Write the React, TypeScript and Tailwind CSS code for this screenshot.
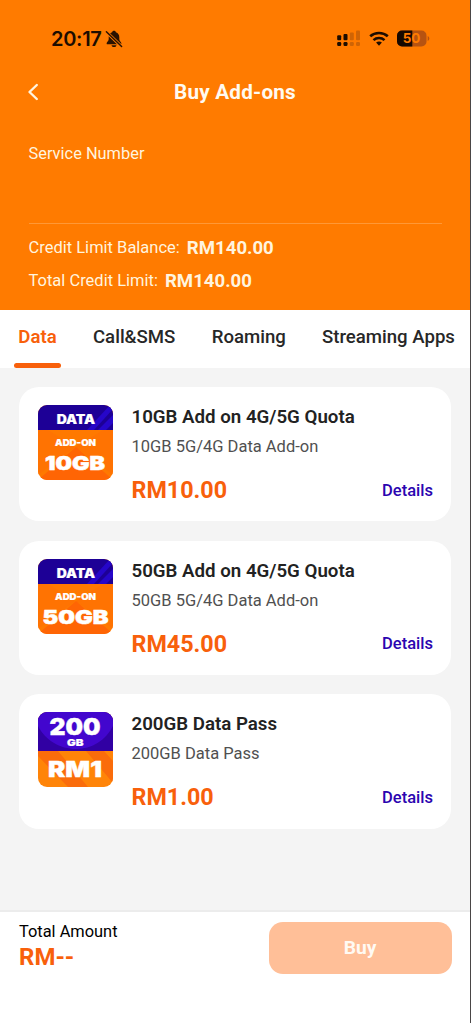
type Plan = {
  badge: 'addon' | 'pass';
  size: string;
  title: string;
  description: string;
  price: string;
};

const tabs = [
  { label: 'Data', width: 'w-[39px]' },
  { label: 'Call&SMS', width: 'w-[83px]' },
  { label: 'Roaming', width: 'w-[75px]' },
  { label: 'Streaming Apps', width: 'w-[133px]' },
];

const plans: Plan[] = [
  { badge: 'addon', size: '10GB', title: '10GB Add on 4G/5G Quota', description: '10GB 5G/4G Data Add-on', price: 'RM10.00' },
  { badge: 'addon', size: '50GB', title: '50GB Add on 4G/5G Quota', description: '50GB 5G/4G Data Add-on', price: 'RM45.00' },
  { badge: 'pass', size: '200', title: '200GB Data Pass', description: '200GB Data Pass', price: 'RM1.00' },
];

function BellOffIcon() {
  return (
    <svg viewBox="0 0 18 18" className="h-[18px] w-[18px]">
      <path d="M9 .8C8 .8 7.300 1.400 7.100 2.200C4.800 3 3.700 4.800 3.700 7.200v2C3.700 11 1.600 12 1.600 13.400c0 .6.400.900 1 .900h12.800c.6 0 1-.3 1-.9 0-1.400-2.100-2.400-2.100-4.200v-2c0-2.400-1.100-4.200-3.400-5C10.700 1.400 10 .8 9 .8Z" fill="#2a1200" />
      <path d="M6.500 15.200h5c-.3 1.200-1.200 1.900-2.500 1.900s-2.200-.7-2.500-1.900Z" fill="#2a1200" />
      <path d="M.8 1.300 17 17" stroke="#ff7b00" strokeWidth="3.200" />
      <path d="M1.400 1.800 16.600 16.500" stroke="#2a1200" strokeWidth="1.500" strokeLinecap="round" />
    </svg>
  );
}

function SignalIcon() {
  return (
    <svg viewBox="0 0 24 17" className="h-[17px] w-6">
      <g fill="#1c0d00">
        <rect x="0.200" y="5.300" width="4" height="5" rx="1" />
        <rect x="6.500" y="4" width="4" height="6.300" rx="1" />
        <rect x="0.200" y="12" width="4" height="4" rx="1.200" />
        <rect x="6.500" y="12" width="4" height="4" rx="1.200" />
      </g>
      <g fill="#cf6405">
        <rect x="12.800" y="2.500" width="4" height="7.800" rx="1" />
        <rect x="19" y="0.500" width="4" height="9.800" rx="1" />
        <rect x="12.800" y="12" width="4" height="4" rx="1.200" />
        <rect x="19" y="12" width="4" height="4" rx="1.200" />
      </g>
    </svg>
  );
}

function WifiIcon() {
  return (
    <svg viewBox="0 0 20 16" className="h-4 w-5" fill="none" stroke="#1c0d00" strokeWidth="2.600">
      <path d="M1.200 5.300C6 .9 14 .9 18.800 5.300" />
      <path d="M4.500 9.100c3-2.800 8-2.800 11 0" />
      <path d="M7.100 11.500c1.700-1.500 4.100-1.500 5.800 0L10 14.800Z" fill="#1c0d00" stroke="none" />
    </svg>
  );
}

function BatteryIcon() {
  return (
    <svg viewBox="0 0 33 17" className="h-[17px] w-[33px]">
      <rect x="0" y="0.500" width="29.500" height="16" rx="5" fill="#b65311" />
      <path d="M5 .5h10.300v16H5a5 5 0 0 1-5-5v-6a5 5 0 0 1 5-5Z" fill="#160800" />
      <path d="M30.700 6v5c1-.4 1.600-1.300 1.600-2.500S31.700 6.400 30.700 6Z" fill="#b65311" />
      <text x="5.800" y="13.300" fontSize="13.500" fontWeight="700" fontFamily="Inter, sans-serif" fill="#ff7b00" textLength="17.500">50</text>
    </svg>
  );
}

function AddonBadge({ size }: { size: string }) {
  return (
    <svg viewBox="0 0 75 75" className="h-[75px] w-[75px] shrink-0 rounded-[9px]">
      <rect width="75" height="75" fill="#ff7900" />
      <path d="M0 25h10l27 17L0 70Z" fill="#ff7302" />
      <path d="M75 25H65L38 42l37 28Z" fill="#ff7302" />
      <path d="M0 75 38 42l37 33Z" fill="#ff6504" />
      <rect width="75" height="25" fill="#1d0096" />
      <path d="M49 25 72 0h3v4L56 25Z" fill="#2606c9" />
      <path d="M60 25 75 10v8l-7 7Z" fill="#2606c9" />
      <g fill="white" stroke="white" fontFamily="Inter, 'Liberation Sans', sans-serif" fontWeight="900">
        <text x="18.700" y="18.500" fontSize="12.500" strokeWidth="0.200" textLength="38.500" lengthAdjust="spacingAndGlyphs">DATA</text>
        <text x="17" y="41" fontSize="9.300" strokeWidth="0.200" textLength="41" lengthAdjust="spacingAndGlyphs">ADD-ON</text>
        <text x={size === '50GB' ? 4.500 : 7} y="65.300" fontSize="18.800" strokeWidth="0.500" textLength={size === '50GB' ? 66 : 60} lengthAdjust="spacingAndGlyphs">{size}</text>
      </g>
    </svg>
  );
}

function PassBadge({ size }: { size: string }) {
  return (
    <svg viewBox="0 0 75 75" className="h-[75px] w-[75px] shrink-0 rounded-[9px]">
      <rect width="75" height="75" fill="#ff8408" />
      <path d="M0 39h20l30 36H30L0 44ZM48 39h18l9 10v22Z" fill="#fa6c0b" />
      <rect width="75" height="39" fill="#3100a3" />
      <path d="M0 0h75v14C68 28 54 37 38 37S7 28 0 14Z" fill="#4206ce" />
      <g fill="white" stroke="white" fontFamily="Inter, 'Liberation Sans', sans-serif" fontWeight="900">
        <text x="11.500" y="22.800" fontSize="23.500" strokeWidth="0.400" textLength="51" lengthAdjust="spacingAndGlyphs">{size}</text>
        <text x="29" y="33.800" fontSize="9.300" strokeWidth="0.200" textLength="16.500" lengthAdjust="spacingAndGlyphs">GB</text>
        <text x="10" y="64.500" fontSize="22" strokeWidth="0.400" textLength="54" lengthAdjust="spacingAndGlyphs">RM1</text>
      </g>
    </svg>
  );
}

function PlanCard({ plan }: { plan: Plan }) {
  return (
    <article className="flex h-[134.4px] gap-[19px] rounded-[20px] bg-white pt-[18px] pr-[18px] pl-[18.5px]">
      {plan.badge === 'addon' ? <AddonBadge size={plan.size} /> : <PassBadge size={plan.size} />}
      <div className="flex flex-1 flex-col">
        <h2 className="text-[18.7px] leading-[24px] font-semibold whitespace-nowrap text-[#222]">{plan.title}</h2>
        <p className="mt-[7px] text-[16.5px] leading-[22px] font-[450] text-[#505050]">{plan.description}</p>
        <div className="mt-[15.5px] flex items-center justify-between">
          <span className="text-[23.3px] leading-[32px] font-bold text-[#f8600b]">{plan.price}</span>
          <button className="pt-px text-[16.5px] leading-[32px] font-medium text-[#2b05b0]">Details</button>
        </div>
      </div>
    </article>
  );
}

export default function App() {
  return (
    <div className="flex h-[1023px] w-[471px] flex-col overflow-hidden border-r border-[#4a4646] bg-white font-[Roboto,sans-serif]">
      <header className="flex h-[309.5px] shrink-0 flex-col bg-[#ff7b00] text-[#fff4df]">
        {/* Status bar */}
        <div className="flex h-[60px] items-end justify-between pr-10 pb-[10.5px] pl-[51px]">
          <div className="flex items-center gap-[3px]">
            <span className="font-[Inter,sans-serif] text-[20px] leading-[22px] font-semibold tracking-[-0.3px] text-[#1c0d00]">20:17</span>
            <BellOffIcon />
          </div>
          <div className="flex h-[22px] items-center gap-2">
            <SignalIcon />
            <WifiIcon />
            <BatteryIcon />
          </div>
        </div>

        <div className="grid h-[64px] grid-cols-[70px_1fr_70px] items-center">
          <button className="pl-[27px]" aria-label="Back">
            <svg viewBox="0 0 12 18" className="h-[18px] w-3" fill="none" stroke="currentColor" strokeWidth="2.400" strokeLinecap="round" strokeLinejoin="round">
              <path d="M9.800 2 2.500 9l7.300 7" />
            </svg>
          </button>
          <h1 className="pt-px text-center text-[20.7px] font-bold tracking-[0.2px] text-[#fffaf0]">Buy Add-ons</h1>
        </div>

        <div className="mr-7 ml-[28.5px] flex flex-col">
          <p className="mt-[18px] text-[16.4px] leading-6 font-[450]">Service Number</p>
          <div className="mt-[57px] h-px bg-[#ff9836]" />
          <div className="mt-[12px] flex items-center gap-[7px] text-[16.5px] leading-6 font-[450]">
            <span>Credit Limit Balance:</span>
            <span className="text-[18.6px] font-bold">RM140.00</span>
          </div>
          <div className="mt-[9px] flex items-center gap-[7px] text-[16.5px] leading-6 font-[450]">
            <span>Total Credit Limit:</span>
            <span className="text-[18.6px] font-bold">RM140.00</span>
          </div>
        </div>
      </header>

      <nav className="flex h-[58.5px] shrink-0 justify-between pr-[15px] pl-[18px] text-[18.6px] font-medium whitespace-nowrap text-[#272727]">
        {tabs.map((tab, i) => (
          <button key={tab.label} className={`relative pb-[1px] ${tab.width} ${i === 0 ? 'font-semibold text-[#f8600b]' : ''}`}>
            {tab.label}
            {i === 0 && <span className="absolute bottom-0 -left-1 h-[5px] w-[47px] rounded-full bg-[#f8600b]" />}
          </button>
        ))}
      </nav>

      <main className="flex flex-1 flex-col gap-[19.2px] bg-[#f4f4f4] px-[19px] pt-[19px]">
        {plans.map((plan) => (
          <PlanCard key={plan.title} plan={plan} />
        ))}
      </main>

      <footer className="flex h-[113px] shrink-0 justify-between border-t-2 border-[#ececec] bg-white pr-[18.5px] pl-[19px]">
        <div className="pt-[9px]">
          <p className="text-[16.4px] leading-[22px] font-[450] text-black">Total Amount</p>
          <p className="text-[24px] leading-[28px] font-bold text-[#f8600b]">RM--</p>
        </div>
        <button className="mt-[10px] h-[51.5px] w-[183px] rounded-[14px] bg-[#ffbf98] pt-[2px] text-[19.2px] font-bold text-[#fffaf3]">Buy</button>
      </footer>
    </div>
  );
}
